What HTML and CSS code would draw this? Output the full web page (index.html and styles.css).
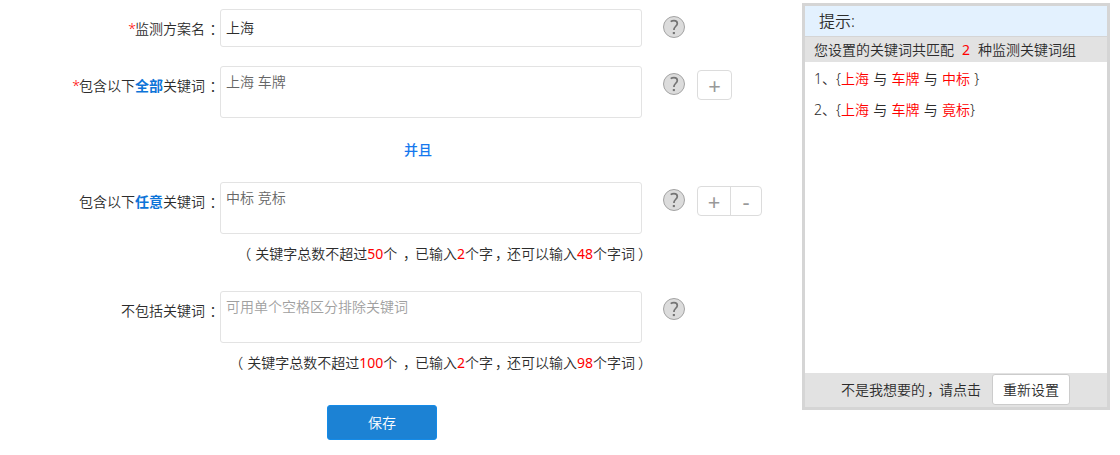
FILE: index.html
```html
<!DOCTYPE html>
<html lang="zh-CN">
<head>
<meta charset="utf-8">
<title>监测方案</title>
<link rel="stylesheet" href="styles.css">
</head>
<body>
<main class="page">
  <form class="form">
    <div class="row row-name">
      <label class="label"><span class="red star">*</span>监测方案名<span class="colon">：</span></label>
      <div class="field field-single">上海</div>
      <svg class="help" viewBox="0 0 24 24"><circle cx="12" cy="12" r="10.5"/><path d="M8.7 6.6Q10 5.6 12 5.6C14 5.6 15.3 6.7 15.3 8.4C15.3 11.2 11.9 11.4 11.9 15"/><rect x="10.8" y="17" width="2.1" height="2.1"/></svg>
    </div>
    <div class="row row-all">
      <label class="label"><span class="red star">*</span>包含以下<b class="blue">全部</b>关键词<span class="colon">：</span></label>
      <div class="field">上海 车牌</div>
      <svg class="help" viewBox="0 0 24 24"><circle cx="12" cy="12" r="10.5"/><path d="M8.7 6.6Q10 5.6 12 5.6C14 5.6 15.3 6.7 15.3 8.4C15.3 11.2 11.9 11.4 11.9 15"/><rect x="10.8" y="17" width="2.1" height="2.1"/></svg>
      <div class="buttons"><span class="btn">+</span></div>
    </div>
    <div class="joiner">并且</div>
    <div class="row row-any">
      <label class="label">包含以下<b class="blue">任意</b>关键词<span class="colon">：</span></label>
      <div class="field">中标 竞标</div>
      <svg class="help" viewBox="0 0 24 24"><circle cx="12" cy="12" r="10.5"/><path d="M8.7 6.6Q10 5.6 12 5.6C14 5.6 15.3 6.7 15.3 8.4C15.3 11.2 11.9 11.4 11.9 15"/><rect x="10.8" y="17" width="2.1" height="2.1"/></svg>
      <div class="buttons"><span class="btn btn-plus">+</span><span class="btn btn-minus">-</span></div>
    </div>
    <p class="note"><span class="open">（</span>关键字总数不超过<span class="red num">50</span>个 <span class="comma">，</span>已输入<span class="red num">2</span>个字<span class="comma">，</span>还可以输入<span class="red num">48</span>个字词<span class="close">）</span></p>
    <div class="row row-none">
      <label class="label">不包括关键词<span class="colon">：</span></label>
      <div class="field field-hint">可用单个空格区分排除关键词</div>
      <svg class="help" viewBox="0 0 24 24"><circle cx="12" cy="12" r="10.5"/><path d="M8.7 6.6Q10 5.6 12 5.6C14 5.6 15.3 6.7 15.3 8.4C15.3 11.2 11.9 11.4 11.9 15"/><rect x="10.8" y="17" width="2.1" height="2.1"/></svg>
    </div>
    <p class="note"><span class="open">（</span>关键字总数不超过<span class="red num">100</span>个 <span class="comma">，</span>已输入<span class="red num">2</span>个字<span class="comma">，</span>还可以输入<span class="red num">98</span>个字词<span class="close">）</span></p>
    <button class="save" type="button">保存</button>
  </form>
  <aside class="panel">
    <h2 class="panel-title">提示:</h2>
    <div class="summary">您设置的关键词共匹配<span class="red num count">2</span>种监测关键词组</div>
    <div class="groups">
      <div>1、{<span class="red">上海</span> 与 <span class="red">车牌</span> 与 <span class="red">中标</span> }</div>
      <div>2、{<span class="red">上海</span> 与 <span class="red">车牌</span> 与 <span class="red">竟标</span>}</div>
    </div>
    <div class="panel-foot"><span>不是我想要的<span class="comma">，</span>请点击</span><button class="reset" type="button">重新设置</button></div>
  </aside>
</main>
</body>
</html>
```
FILE: styles.css
```css
* { box-sizing: border-box; }
body {
  margin: 0;
  background: #fff;
  color: #2c2c2c;
  font: 350 14px/20px "Noto Sans", "Noto Sans CJK SC", sans-serif;
  font-kerning: none;
}
button { font: inherit; padding: 0; }
.page { display: flex; height: 455px; }
.form { width: 802px; padding-top: 9px; display: flex; flex-direction: column; }
.row { display: flex; align-items: flex-start; }
.label { width: 219px; margin-right: 1px; padding-top: 10px; text-align: right; white-space: nowrap; }
.red { color: #f00; }
.num { font-weight: 400; }
.star { margin-right: -1px; }
.blue { color: #0d74d8; font-weight: 700; }
/* half-width punctuation, padded out to a full character cell */
.colon, .comma, .open, .close { font-feature-settings: "halt"; }
.colon { padding: 0 2.5px 0 4.5px; }
.comma { padding: 0 5px 0 2px; }
.open { padding: 0 4px 0 3px; }
.close { padding: 0 4px 0 3px; }
.field {
  width: 422px;
  height: 52px;
  padding: 5px 5px;
  border: 1px solid #e3e3e3;
  border-radius: 3px;
  color: #666;
}
.field-single { height: 38px; padding-top: 8px; color: #2c2c2c; }
.field-hint { color: #a0a0a0; }
.help { width: 24px; height: 24px; margin: 6px 0 0 20px; }
.help circle { fill: #dcdcdc; stroke: #a3a3a3; stroke-width: 1; }
.help path { fill: none; stroke: #747474; stroke-width: 1.7; }
.help rect { fill: #747474; }
.row-all { margin-top: 19px; }
.buttons {
  display: flex;
  height: 30px;
  margin: 4px 0 0 11px;
  border: 1px solid #dcdcdc;
  border-radius: 4px;
}
.btn {
  width: 33px;
  color: #999;
  font: 22px/29px "Noto Sans", sans-serif;
  text-align: center;
}
.btn-plus { width: 32px; }
.btn-minus { width: 31px; border-left: 1px solid #dcdcdc; }
.joiner { margin: 22px 0 22px 404px; color: #1678ee; font-weight: 500; }
.note { width: 649px; margin: 10px 0 27px; text-align: right; }
.save {
  width: 110px;
  height: 35px;
  margin: 5px 0 0 327px;
  border: 1px solid #148be8;
  border-radius: 3px;
  background: #1c82d4;
  color: #fff;
  line-height: 32px;
}
.panel {
  display: flex;
  flex-direction: column;
  width: 308px;
  height: 407px;
  margin-top: 3px;
  border: 3px solid #d5d5d5;
}
.panel-title {
  height: 31px;
  margin: 0;
  padding-left: 14px;
  border-bottom: 1px solid #d5d5d5;
  background: #e3f1fe;
  font-size: 16px;
  font-weight: 350;
  line-height: 31px;
}
.summary { height: 25px; padding-left: 9px; background: #e2e2e2; line-height: 25px; }
.count { margin: 0 8px; }
.groups { flex: 1; padding: 1px 0 0 9px; line-height: 31px; word-spacing: 0.6px; }
.panel-foot {
  display: flex;
  height: 34px;
  padding: 1px 0 0 36px;
  gap: 11px;
  background: #e2e2e2;
  line-height: 31px;
}
.reset {
  width: 78px;
  height: 31px;
  border: 1px solid #ccc;
  border-radius: 3px;
  background: #fff;
  color: #2c2c2c;
  line-height: 28px;
}
```
